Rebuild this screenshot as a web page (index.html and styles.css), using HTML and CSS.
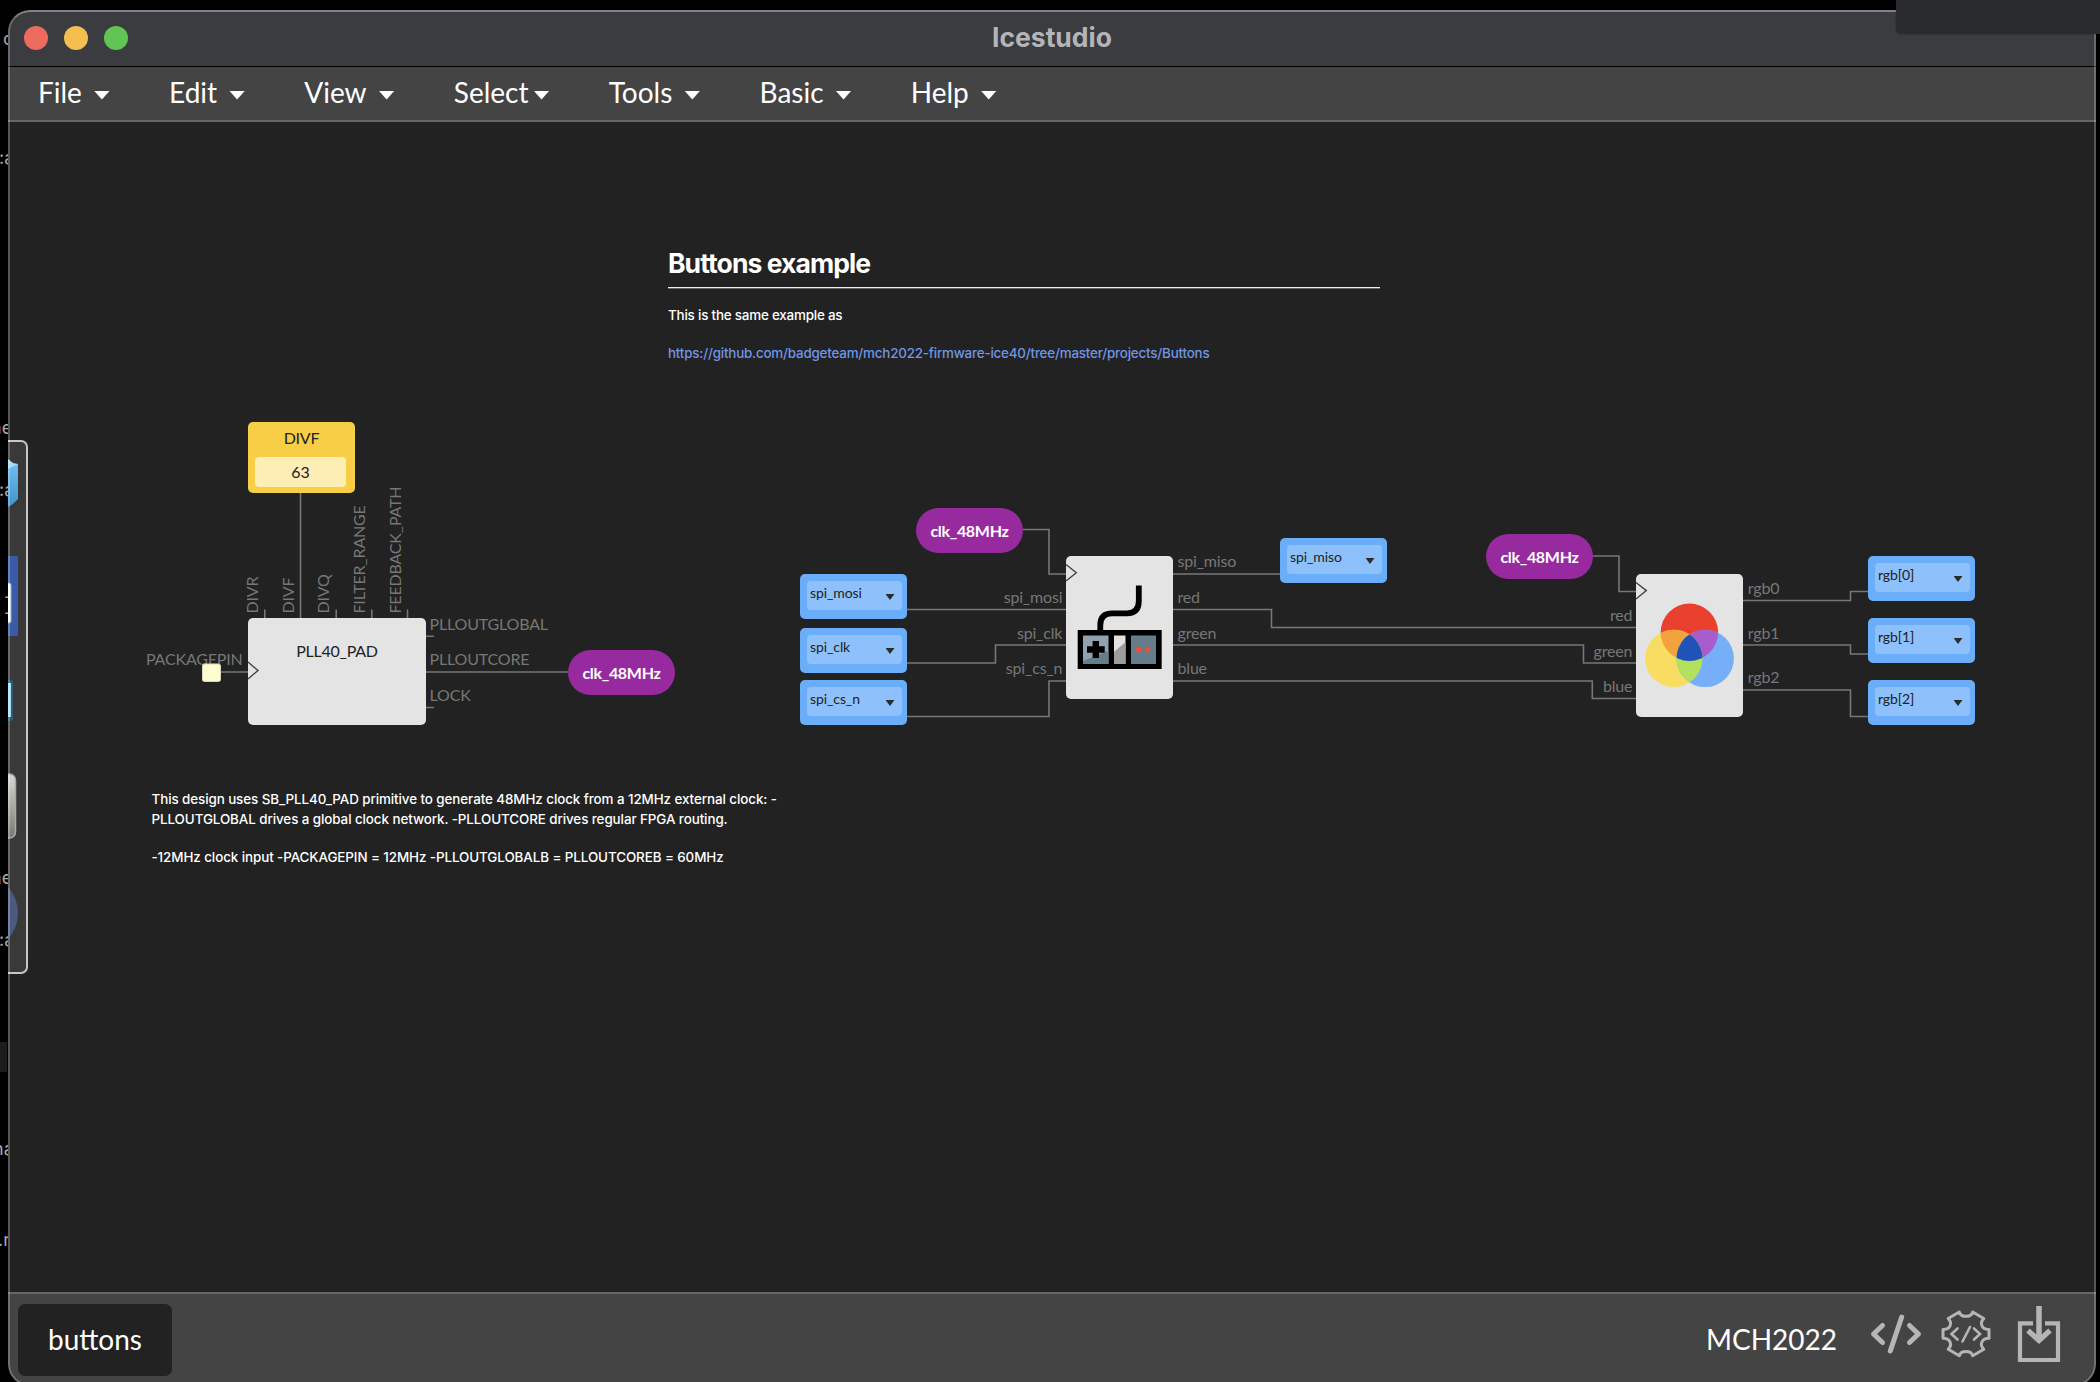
FILE: index.html
```html
<!DOCTYPE html>
<html lang="en">
<head>
<meta charset="utf-8">
<title>Icestudio</title>
<link rel="stylesheet" href="styles.css">
</head>
<body>
<div class="desktop">
  <svg class="behind" width="8" height="1382" viewBox="0 0 8 1382">
    <rect x="0" y="1042" width="7" height="30" fill="#1c1c1c"/>
    <g class="behind-text">
      <text x="3" y="45">o</text><text x="-1" y="164">:a</text>
      <text x="-9" y="434">ne</text><text x="-1" y="496">:a</text>
      <text x="4" y="603">-</text><text x="4" y="619">-</text>
      <text x="-9" y="884">ne</text><text x="-1" y="946">:a</text>
      <text x="-7" y="1155">na</text><text x="-2" y="1246">.r</text>
    </g>
  </svg>
  <main class="window">
    <header class="titlebar">
      <div class="lights"><i class="light close"></i><i class="light minimize"></i><i class="light zoom"></i></div>
      <h1 class="title">Icestudio</h1>
    </header>
    <nav class="menubar">
      <span class="menu">File<i class="caret"></i></span>
      <span class="menu">Edit<i class="caret"></i></span>
      <span class="menu">View<i class="caret"></i></span>
      <span class="menu tight">Select<i class="caret"></i></span>
      <span class="menu">Tools<i class="caret"></i></span>
      <span class="menu">Basic<i class="caret"></i></span>
      <span class="menu">Help<i class="caret"></i></span>
    </nav>
    <section class="canvas">
      <div class="world">
        <svg class="wires" width="2100" height="1382" viewBox="0 0 2100 1382">
          <g class="wire">
            <path d="M300.5 493V618M264.8 609.5V618M336.2 609.5V618M371.8 609.5V618M407.5 609.5V618"/>
            <path d="M220 672H248M426 636.3H434M426 672H568M426 707.5H434"/>
            <path d="M1023 529.5H1049V574H1066M907 609.5H1066M907 663H995.5V645H1066M907 716.5H1049V681H1066"/>
            <path d="M1173 574H1280M1173 609.5H1271.5V627.5H1636M1173 645H1583.5V663H1636M1173 681H1592.3V698.5H1636"/>
            <path d="M1593 556H1619V591.5H1636M1743 600.5H1850.5V591.5H1868M1743 645H1850.5V654H1868M1743 690H1850.5V716.5H1868"/>
          </g>
          <g class="port">
            <text transform="translate(257.8 613.5) rotate(-90)">DIVR</text>
            <text transform="translate(293.8 613.5) rotate(-90)">DIVF</text>
            <text transform="translate(329 613.5) rotate(-90)">DIVQ</text>
            <text transform="translate(365.3 613.5) rotate(-90)">FILTER_RANGE</text>
            <text transform="translate(401.3 613.5) rotate(-90)">FEEDBACK_PATH</text>
            <text x="429.6" y="630">PLLOUTGLOBAL</text>
            <text x="429.6" y="665">PLLOUTCORE</text>
            <text x="429.6" y="701">LOCK</text>
            <text x="1177.5" y="567">spi_miso</text>
            <text x="1177.5" y="603">red</text>
            <text x="1177.5" y="639">green</text>
            <text x="1177.5" y="674">blue</text>
            <text x="1747.8" y="594">rgb0</text>
            <text x="1747.8" y="639">rgb1</text>
            <text x="1747.8" y="683">rgb2</text>
          </g>
          <g class="port end">
            <text x="242.6" y="665">PACKAGEPIN</text>
            <text x="1062.3" y="603">spi_mosi</text>
            <text x="1062.3" y="639">spi_clk</text>
            <text x="1062.3" y="674">spi_cs_n</text>
            <text x="1632.3" y="621">red</text>
            <text x="1632.3" y="656.5">green</text>
            <text x="1632.3" y="692">blue</text>
          </g>
          <rect x="202.5" y="664" width="18" height="17.5" rx="2" fill="#fdfdd0" stroke="#d9d9bd" stroke-width="1"/>
        </svg>

        <article class="note intro" style="left:668px;top:246px;width:712px">
          <h2>Buttons example</h2>
          <p>This is the same example as</p>
          <p><a>https://github.com/badgeteam/mch2022-firmware-ice40/tree/master/projects/Buttons</a></p>
        </article>
        <article class="note" style="left:151.5px;top:789px;width:660px">
          <p>This design uses SB_PLL40_PAD primitive to generate 48MHz clock from a 12MHz external clock: -<br>PLLOUTGLOBAL drives a global clock network. -PLLOUTCORE drives regular FPGA routing.</p>
          <p>-12MHz clock input -PACKAGEPIN = 12MHz -PLLOUTGLOBALB = PLLOUTCOREB = 60MHz</p>
        </article>

        <div class="constant" style="left:248px;top:422px"><span>DIVF</span><b>63</b></div>
        <div class="block pll" style="left:248px;top:618px"><span>PLL40_PAD</span></div>
        <div class="block" style="left:1066px;top:556px"></div>
        <div class="block" style="left:1636px;top:574px"></div>

        <div class="label" style="left:568px;top:650px">clk_48MHz</div>
        <div class="label" style="left:916px;top:508px">clk_48MHz</div>
        <div class="label" style="left:1486px;top:534px">clk_48MHz</div>

        <div class="pin" style="left:800px;top:574px"><span>spi_mosi</span></div>
        <div class="pin" style="left:800px;top:628px"><span>spi_clk</span></div>
        <div class="pin" style="left:800px;top:680px"><span>spi_cs_n</span></div>
        <div class="pin" style="left:1280px;top:538px"><span>spi_miso</span></div>
        <div class="pin" style="left:1868px;top:556px"><span>rgb[0]</span></div>
        <div class="pin" style="left:1868px;top:618px"><span>rgb[1]</span></div>
        <div class="pin" style="left:1868px;top:680px"><span>rgb[2]</span></div>

        <svg class="wires" width="2100" height="1382" viewBox="0 0 2100 1382">
          <g fill="none" stroke="#444" stroke-width="1.4">
            <path d="M248 662L258 670.5L248 679M1066 564.5L1076.3 572.7L1066 581M1636 582.5L1646.3 590.6L1636 599"/>
          </g>
          <!-- game controller -->
          <path d="M1100.3 632V625Q1100.3 613.3 1112 613.3H1127Q1138.8 613.3 1138.8 601V585.5" fill="none" stroke="#000" stroke-width="5.8"/>
          <rect x="1077.7" y="630" width="84" height="39"/>
          <rect x="1083" y="635.5" width="25.5" height="28.5" fill="#91a2ae"/>
          <path d="M1083 661L1108.5 651V664H1083Z" fill="#657c8a"/>
          <rect x="1114" y="635.5" width="11.5" height="28.5" fill="#e2e2e2"/>
          <path d="M1114 652L1125.5 642V664H1114Z" fill="#9c9c9c"/>
          <rect x="1131" y="635.5" width="25" height="28.5" fill="#657c8a"/>
          <path d="M1087 649.5H1104.7M1095.8 641V658" stroke="#000" stroke-width="6.4"/>
          <circle cx="1138.8" cy="649.5" r="2.9" fill="#e8513c"/><circle cx="1147.4" cy="649.5" r="2.9" fill="#e8513c"/>
          <!-- colour mixing circles -->
          <clipPath id="in-red"><circle cx="1689.4" cy="632.2" r="28.7"/></clipPath>
          <clipPath id="in-yellow"><circle cx="1673.8" cy="658.4" r="28.7"/></clipPath>
          <circle cx="1689.4" cy="632.2" r="28.7" fill="#ea412f"/>
          <circle cx="1673.8" cy="658.4" r="28.7" fill="#f9dc62"/>
          <circle cx="1705.2" cy="658.4" r="28.7" fill="#76aef7"/>
          <circle cx="1673.8" cy="658.4" r="28.7" fill="#f2a33e" clip-path="url(#in-red)"/>
          <circle cx="1705.2" cy="658.4" r="28.7" fill="#a95ccb" clip-path="url(#in-red)"/>
          <g clip-path="url(#in-yellow)">
            <circle cx="1705.2" cy="658.4" r="28.7" fill="#b3e15d"/>
            <circle cx="1705.2" cy="658.4" r="28.7" fill="#1f53b9" clip-path="url(#in-red)"/>
          </g>
        </svg>
      </div>

      <aside class="dock">
        <svg width="18" height="530" viewBox="8 442 18 530">
          <defs>
            <linearGradient id="box" x2="0" y2="1"><stop offset="0" stop-color="#70bdec"/><stop offset="1" stop-color="#3f93d3"/></linearGradient>
            <linearGradient id="metal" x2="0" y2="1"><stop offset="0" stop-color="#d9d9d6"/><stop offset="1" stop-color="#777971"/></linearGradient>
          </defs>
          <path d="M8 464L18 464V499Q14 504 8 507Z" fill="url(#box)"/>
          <path d="M8 459L13 463L18 464L10 468H8Z" fill="#a5dcf6"/>
          <rect x="8" y="556" width="10" height="80" fill="#3a5ba8"/>
          <rect x="2" y="583" width="9" height="40" rx="2" fill="#fff" stroke="#9fa8bd"/>
          <rect x="2" y="680" width="11" height="41" rx="2" fill="#2d5a73"/>
          <rect x="2" y="683" width="9" height="34" fill="#a7def5"/>
          <rect x="0" y="774" width="15.5" height="64" rx="6" fill="url(#metal)" stroke="#a9aaa5" stroke-width="1.5"/>
          <circle cx="-20.8" cy="913" r="38.8" fill="#4b5b80"/>
        </svg>
      </aside>
    </section>
    <footer class="footer">
      <span class="tab">buttons</span>
      <div class="status">
        <span class="board">MCH2022</span>
        <svg class="tools" width="200" height="60" viewBox="1864 1304 200 60" fill="none" stroke="#b5b5b5">
          <path d="M1882.5 1325.5L1873.5 1334L1882.5 1342.5M1909.5 1325.5L1918.5 1334L1909.5 1342.5M1901.7 1317L1890.3 1351" stroke-width="5" stroke-linecap="round" stroke-linejoin="round"/>
          <path d="M1959.3 1312C1960.8 1317.8 1971.2 1317.8 1972.7 1312L1983.8 1318.5C1979 1323.5 1982 1329.8 1989 1329.4V1338.2C1982 1338 1979 1344.5 1983.8 1349.3L1972.7 1355.8C1971.2 1350 1960.8 1350 1959.3 1355.8L1948.2 1349.3C1953 1344.5 1950 1338 1943 1338.2V1329.4C1950 1329.8 1953 1323.5 1948.2 1318.5Z" stroke-width="3" stroke-linejoin="round"/>
          <path d="M1957.5 1328.5L1951.5 1334L1957.5 1339.5M1974 1328.5L1980 1334L1974 1339.5M1970 1327L1962.5 1341.5" stroke-width="2.6" stroke-linecap="round"/>
          <path d="M2033 1323.3H2020V1360H2058V1323.3H2045" stroke-width="4.2"/>
          <path d="M2039 1306V1340" stroke-width="5.5"/>
          <path d="M2028 1330.5L2039 1340.5L2050 1330.5" stroke-width="5.2"/>
        </svg>
      </div>
    </footer>
  </main>
  <div class="overlay"></div>
</div>
</body>
</html>
```
FILE: styles.css
```css
* { box-sizing: border-box; }
body { margin: 0; background: #000; }
.desktop { position: relative; width: 2100px; height: 1382px; overflow: hidden; background: #000; font-family: Lato, sans-serif; }
.behind { position: absolute; left: 0; top: 0; }
.behind-text { fill: #a9a9ad; font: 18px Inter, sans-serif; }

.window { position: absolute; left: 8px; top: 10px; width: 2088px; height: 1376px; border-radius: 22px; overflow: hidden; background: #222; display: flex; flex-direction: column; }
.window::after { content: ""; position: absolute; inset: 0; border: 2px solid rgba(255, 255, 255, .24); border-top-color: rgba(255, 255, 255, .36); border-radius: 22px; pointer-events: none; }
.titlebar { flex: none; height: 57px; display: grid; grid-template-columns: 1fr auto 1fr; align-items: center; background: #3b3c40; border-bottom: 1px solid #000; }
.lights { display: flex; gap: 16px; padding-left: 16px; }
.light { width: 24px; height: 24px; border-radius: 50%; }
.close { background: #ed6a5e; }
.minimize { background: #f5bf4f; }
.zoom { background: #61c554; }
.title { margin: 0; padding-bottom: 3px; font: 700 26.5px/30px Inter, sans-serif; color: #b4b5b8; }

.menubar { flex: none; height: 55px; display: flex; align-items: center; gap: 59.2px; padding: 0 0 3px 30px; background: #444; border-bottom: 2px solid #666; color: #fff; font-size: 28px; line-height: 34px; }
.menu { display: flex; align-items: center; gap: 12px; }
.tight { gap: 5px; }
.caret { width: 16px; height: 9px; margin-top: 6px; background: #fff; clip-path: polygon(0 0, 100% 0, 50% 100%); }

.canvas { flex: none; position: relative; height: 1170px; overflow: hidden; }
.world { position: absolute; left: -8px; top: -122px; width: 2100px; height: 1382px; }
.wires { position: absolute; left: 0; top: 0; }
.wire { fill: none; stroke: #777; stroke-width: 1.6; }
.port { fill: #777; font-size: 16px; letter-spacing: -.18px; }
.end { text-anchor: end; }

.note { position: absolute; color: #fff; font: 500 13.4px/20px Inter, sans-serif; letter-spacing: -.08px; white-space: nowrap; }
.intro { letter-spacing: -.2px; }
.note h2 { margin: 0 0 17px; height: 42px; border-bottom: 1px solid #eee; box-shadow: 0 1px #666; font-size: 26.5px; line-height: 35px; font-weight: 700; letter-spacing: -.92px; }
.note p { margin: 0 0 18px; }
.note a { color: #6f95e6; }

.constant { position: absolute; width: 107px; height: 71px; padding: 6px 9px 6px 7px; border-radius: 5px; background: #f7ce46; color: #222; font-size: 16px; text-align: center; display: flex; flex-direction: column; justify-content: space-between; }
.constant span { line-height: 20px; padding-left: 2px; letter-spacing: -.2px; }
.constant b { height: 30px; line-height: 29px; border-radius: 4px; background: #fceeb4; font-weight: 400; }
.block { position: absolute; width: 107px; height: 143px; border-radius: 5px; background: #e4e4e4; color: #222; font-size: 16px; text-align: center; }
.pll { width: 178px; height: 107px; padding-top: 23px; line-height: 20px; letter-spacing: -.25px; }
.label { position: absolute; width: 107px; height: 45px; border-radius: 22.5px; background: #982aa0; color: #fff; font-size: 16px; font-weight: 700; line-height: 46px; text-align: center; letter-spacing: -.3px; }
.pin { position: absolute; width: 107px; height: 44.5px; padding: 6.5px 5px 9px 6.5px; border-radius: 5px; background: #6aaefa; }
.pin span { display: block; height: 29px; padding-left: 3.5px; border-radius: 4px; background: #8ec1fb; color: #222; font-size: 14px; line-height: 23px; letter-spacing: -.1px; }
.pin::after { content: ""; position: absolute; left: 85.5px; top: 20px; width: 9px; height: 6px; background: #2b2b2b; clip-path: polygon(0 0, 100% 0, 50% 100%); }

.dock { position: absolute; left: 0; top: 318px; width: 20px; height: 534px; border: 2px solid #c6c6c6; border-left: 0; border-radius: 0 7px 7px 0; background: #393939; overflow: hidden; }
.dock svg { display: block; }

.footer { flex: none; height: 94px; display: flex; justify-content: space-between; padding: 10px 32px 0 10px; background: #444; border-top: 2px solid #666; color: #fff; font-size: 28px; }
.tab { width: 154px; height: 72px; border-radius: 7px; background: #222; line-height: 70px; text-align: center; }
.status { display: flex; gap: 27px; line-height: 70px; }
.tools { display: block; }
.overlay { position: absolute; left: 1896px; top: 0; width: 204px; height: 34px; border-radius: 0 0 0 5px; background: #2a2b2e; box-shadow: 0 0 2px rgba(0, 0, 0, .4); }
```
